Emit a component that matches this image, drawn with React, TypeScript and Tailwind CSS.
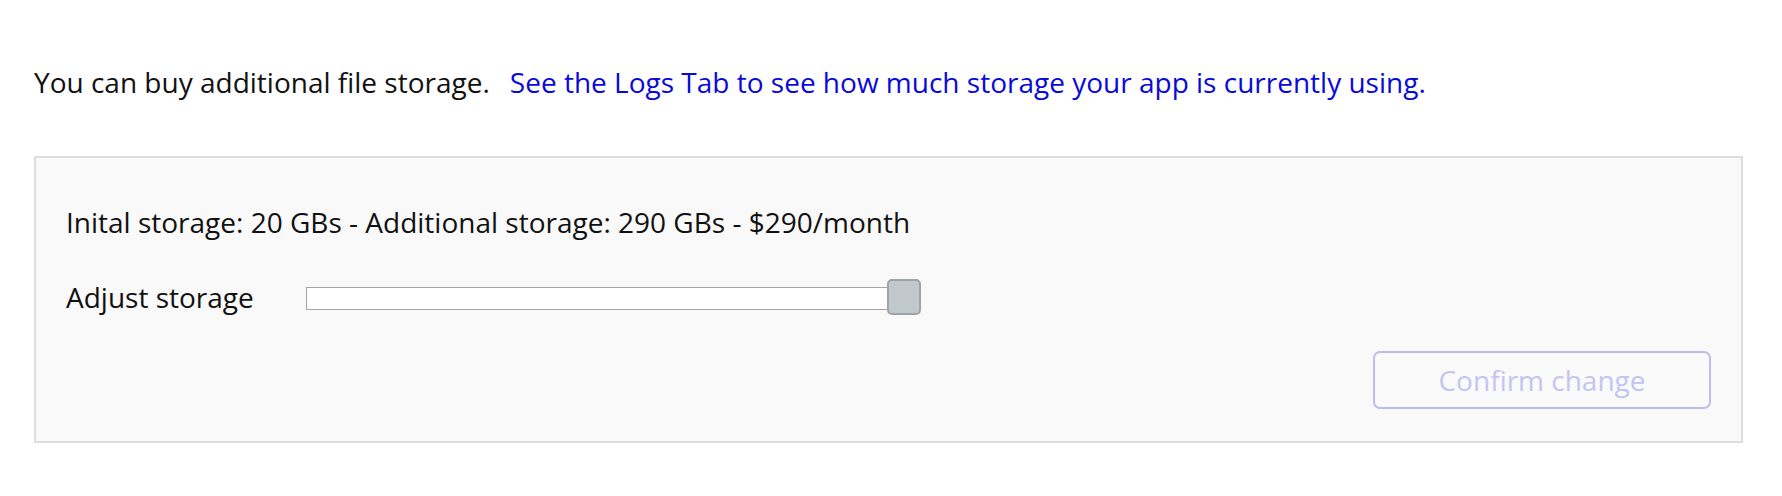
import React, { useState } from 'react';

const App: React.FC = () => {
  const [storage] = useState(290);

  return (
    <div className="w-[1782px] h-[496px] bg-white font-['Open_Sans',sans-serif] text-[28px] leading-[38px] text-[#111]">
      <div className="pt-[63px] pl-[34px] flex">
        <span>You can buy additional file storage.</span>
        <span className="ml-[20px] text-[#0a0ad8] cursor-pointer">
          See the Logs Tab to see how much storage your app is currently using.
        </span>
      </div>

      {/* Storage panel */}
      <div className="mt-[55px] ml-[34px] w-[1709px] border-2 border-[#dddddd] bg-[#f9f9f9] pt-[45px] pb-[32px] px-[30px] flex flex-col">
        <div>Inital storage: 20 GBs - Additional storage: {storage} GBs - ${storage}/month</div>

        <div className="mt-[37px] flex items-center h-[38px]">
          <span className="w-[240px] shrink-0">Adjust storage</span>
          <div className="relative w-[615px] h-[36px] flex items-center">
            <div className="w-[600px] h-[23px] mt-[3px] bg-white border-[1.5px] border-[#a4a4a4]" />
            <div className="absolute right-0 top-0 w-[34px] h-[36px] rounded-[5px] bg-[#c1c9cc] border-2 border-[#9aa5aa]" />
          </div>
        </div>

        <div className="mt-[35px] flex justify-end">
          <button
            disabled
            className="w-[338px] h-[58px] rounded-[7px] border-2 border-[#bcbcee] bg-[#fafafa] text-[#c4c4f2] text-[28px] font-['Open_Sans',sans-serif]"
          >
            Confirm change
          </button>
        </div>
      </div>
    </div>
  );
};

export default App;
